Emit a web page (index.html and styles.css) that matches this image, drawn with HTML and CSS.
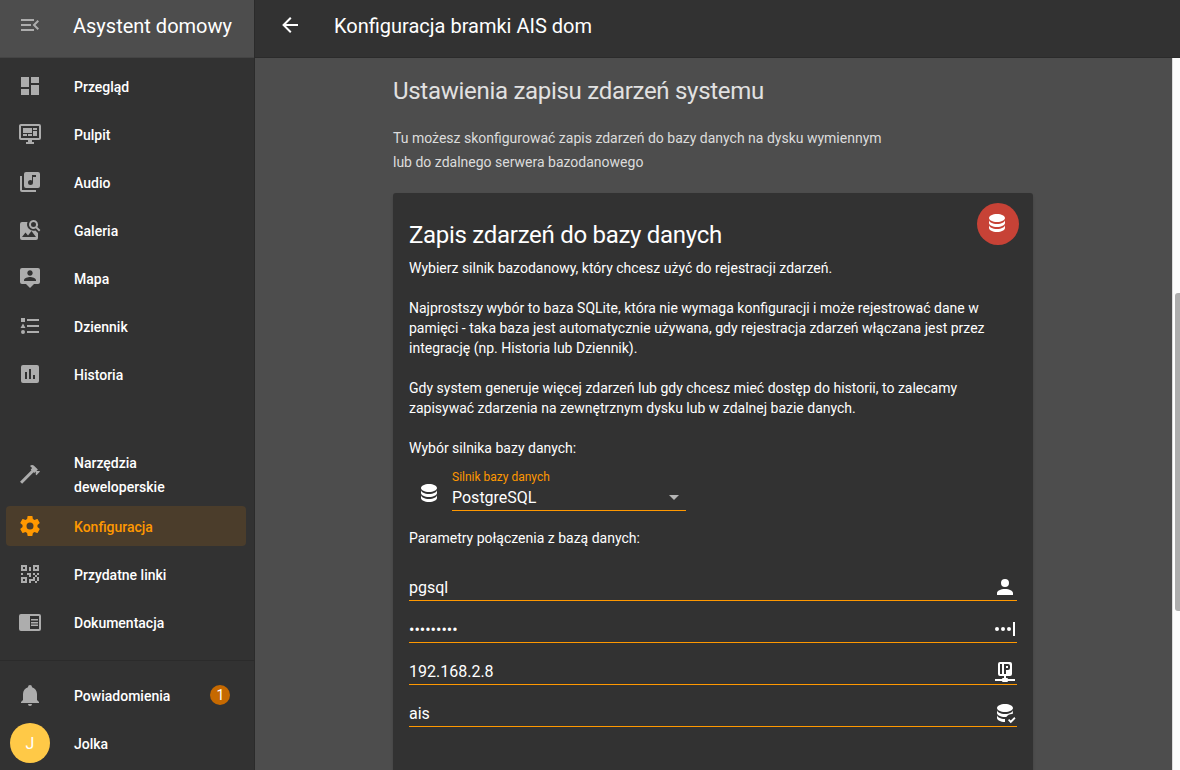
FILE: index.html
```html
<!DOCTYPE html>
<html lang="pl">
<head>
<meta charset="utf-8">
<title>Konfiguracja bramki AIS dom</title>
<link rel="stylesheet" href="styles.css">
</head>
<body>
<div class="app">
  <aside class="sidebar">
    <div class="brand">
      <svg class="icon" viewBox="0 0 24 24"><path d="M21,15.61L19.59,17L14.58,12L19.59,7L21,8.39L17.44,12L21,15.61M3,6H16V8H3V6M3,13V11H13V13H3M3,18V16H16V18H3Z"/></svg>
      <span>Asystent domowy</span>
    </div>
    <nav class="nav">
      <a class="item"><svg class="icon" viewBox="0 0 24 24"><path d="M13,3V9H21V3M13,21H21V11H13M3,21H11V15H3M3,13H11V3H3V13Z"/></svg><span>Przegląd</span></a>
      <a class="item"><svg class="icon" viewBox="0 0 24 24"><path d="M21,16V4H3V16H21M21,2A2,2 0 0,1 23,4V16A2,2 0 0,1 21,18H14V20H16V22H8V20H10V18H3C1.89,18 1,17.1 1,16V4C1,2.89 1.89,2 3,2H21M5,6H14V11H5V6M15,6H19V8H15V6M19,9V14H15V9H19M5,12H9V14H5V12M10,12H14V14H10V12Z"/></svg><span>Pulpit</span></a>
      <a class="item"><svg class="icon" viewBox="0 0 24 24"><path d="M20,2H8A2,2 0 0,0 6,4V16A2,2 0 0,0 8,18H20A2,2 0 0,0 22,16V4A2,2 0 0,0 20,2M18,7H15V12.5A2.5,2.5 0 0,1 12.5,15A2.5,2.5 0 0,1 10,12.5A2.5,2.5 0 0,1 12.5,10C13.07,10 13.58,10.19 14,10.5V5H18M4,6H2V20A2,2 0 0,0 4,22H18V20H4V6Z"/></svg><span>Audio</span></a>
      <a class="item"><svg class="icon" viewBox="0 0 24 24"><path fill-rule="evenodd" d="M15.5,2A4.5,4.5 0 0,1 19.31,8.91L22.41,12L21,13.41L17.86,10.31A4.5,4.5 0 1,1 15.5,2M15.5,4A2.5,2.5 0 0,0 15.5,9A2.5,2.5 0 0,0 15.5,4M4,4H9.5A6.5,6.5 0 0,0 17.5,12.5L20,15V20A2,2 0 0,1 18,22H4A2,2 0 0,1 2,20V6A2,2 0 0,1 4,4M4,19H18L13.5,13L10,17.5L7.5,14.5Z"/></svg><span>Galeria</span></a>
      <a class="item"><svg class="icon" viewBox="0 0 24 24"><path d="M20,2H4A2,2 0 0,0 2,4V16A2,2 0 0,0 4,18H8L12,22L16,18H20A2,2 0 0,0 22,16V4A2,2 0 0,0 20,2M12,4.3C13.5,4.3 14.7,5.5 14.7,7C14.7,8.5 13.5,9.7 12,9.7C10.5,9.7 9.3,8.5 9.3,7C9.3,5.5 10.5,4.3 12,4.3M18,15H6V14.1C6,12.1 10,11 12,11C14,11 18,12.1 18,14.1V15Z" fill-rule="evenodd"/></svg><span>Mapa</span></a>
      <a class="item"><svg class="icon" viewBox="0 0 24 24"><path d="M5,9.5L7.5,14H2.5L5,9.5M3,4H7V8H3V4M5,20A2,2 0 0,0 7,18A2,2 0 0,0 5,16A2,2 0 0,0 3,18A2,2 0 0,0 5,20M9,5V7H21V5H9M9,19H21V17H9V19M9,13H21V11H9V13Z"/></svg><span>Dziennik</span></a>
      <a class="item"><svg class="icon" viewBox="0 0 24 24"><path fill-rule="evenodd" d="M9,17H7V10H9V17M13,17H11V7H13V17M17,17H15V13H17V17M19,3H5A2,2 0 0,0 3,5V19A2,2 0 0,0 5,21H19A2,2 0 0,0 21,19V5A2,2 0 0,0 19,3Z"/></svg><span>Historia</span></a>
    </nav>
    <nav class="nav tools">
      <a class="item tall"><svg class="icon" viewBox="0 0 24 24"><path d="M2,19.63L13.43,8.2L12.72,7.5L14.14,6.07L12,3.89C13.2,2.7 15.09,2.7 16.27,3.89L19.87,7.5L18.45,8.91H21.29L22,9.62L18.45,13.21L17.74,12.5V9.62L16.27,11.04L15.56,10.33L4.13,21.76L2,19.63Z"/></svg><span>Narzędzia<br>deweloperskie</span></a>
      <a class="item active"><svg class="icon" viewBox="0 0 24 24"><path d="M12,15.5A3.5,3.5 0 0,1 8.5,12A3.5,3.5 0 0,1 12,8.5A3.5,3.5 0 0,1 15.5,12A3.5,3.5 0 0,1 12,15.5M19.43,12.97C19.47,12.65 19.5,12.33 19.5,12C19.5,11.67 19.47,11.34 19.43,11L21.54,9.37C21.73,9.22 21.78,8.95 21.66,8.73L19.66,5.27C19.54,5.05 19.27,4.96 19.05,5.05L16.56,6.05C16.04,5.66 15.5,5.32 14.87,5.07L14.5,2.42C14.46,2.18 14.25,2 14,2H10C9.75,2 9.54,2.18 9.5,2.42L9.13,5.07C8.5,5.32 7.96,5.66 7.44,6.05L4.95,5.05C4.73,4.96 4.46,5.05 4.34,5.27L2.34,8.73C2.21,8.95 2.27,9.22 2.46,9.37L4.57,11C4.53,11.34 4.5,11.67 4.5,12C4.5,12.33 4.53,12.65 4.57,12.97L2.46,14.63C2.27,14.78 2.21,15.05 2.34,15.27L4.34,18.73C4.46,18.95 4.73,19.03 4.95,18.95L7.44,17.94C7.96,18.34 8.5,18.68 9.13,18.93L9.5,21.58C9.54,21.82 9.75,22 10,22H14C14.25,22 14.46,21.82 14.5,21.58L14.87,18.93C15.5,18.67 16.04,18.34 16.56,17.94L19.05,18.95C19.27,19.03 19.54,18.95 19.66,18.73L21.66,15.27C21.78,15.05 21.73,14.78 21.54,14.63L19.43,12.97Z"/></svg><span>Konfiguracja</span></a>
      <a class="item"><svg class="icon" viewBox="0 0 24 24"><path d="M3,11H5V13H3V11M11,5H13V9H11V5M9,11H13V15H11V13H9V11M15,11H17V13H19V11H21V13H19V15H21V19H19V21H17V19H13V21H11V17H15V15H17V13H15V11M19,19V15H17V19H19M15,3H21V9H15V3M17,5V7H19V5H17M3,3H9V9H3V3M5,5V7H7V5H5M3,15H9V21H3V15M5,17V19H7V17H5Z"/></svg><span>Przydatne linki</span></a>
      <a class="item"><svg class="icon" viewBox="0 0 24 24"><path fill-rule="evenodd" d="M3,4H21A2,2 0 0,1 23,6V19A2,2 0 0,1 21,21H3A2,2 0 0,1 1,19V6A2,2 0 0,1 3,4M12,6V19H21V6ZM13,9H20V10.5H13ZM13,12H20V13.5H13ZM13,14.5H20V16H13Z"/></svg><span>Dokumentacja</span></a>
    </nav>
    <nav class="nav account">
      <a class="item"><svg class="icon" viewBox="0 0 24 24"><path d="M21,19V20H3V19L5,17V11C5,7.9 7.03,5.17 10,4.29C10,4.19 10,4.1 10,4A2,2 0 0,1 12,2A2,2 0 0,1 14,4C14,4.1 14,4.19 14,4.29C16.97,5.17 19,7.9 19,11V17L21,19M14,21A2,2 0 0,1 12,23A2,2 0 0,1 10,21"/></svg><span>Powiadomienia</span><b class="count">1</b></a>
      <a class="item user"><i class="avatar">J</i><span>Jolka</span></a>
    </nav>
  </aside>
  <div class="page">
    <header class="toolbar">
      <svg class="icon" viewBox="0 0 24 24"><path d="M20,11V13H8L13.5,18.5L12.08,19.92L4.16,12L12.08,4.08L13.5,5.5L8,11H20Z"/></svg>
      <span>Konfiguracja bramki AIS dom</span>
    </header>
    <div class="body">
      <main class="content">
        <h1>Ustawienia zapisu zdarzeń systemu</h1>
        <p class="intro">Tu możesz skonfigurować zapis zdarzeń do bazy danych na dysku wymiennym<br>lub do zdalnego serwera bazodanowego</p>
        <section class="card">
          <div class="card-head">
            <h2>Zapis zdarzeń do bazy danych</h2>
            <div class="status"><svg class="icon" viewBox="0 0 24 24"><path d="M12,3C7.58,3 4,4.79 4,7C4,9.21 7.58,11 12,11C16.42,11 20,9.21 20,7C20,4.79 16.42,3 12,3M4,9V12C4,14.21 7.58,16 12,16C16.42,16 20,14.21 20,12V9C20,11.21 16.42,13 12,13C7.58,13 4,11.21 4,9M4,14V17C4,19.21 7.58,21 12,21C16.42,21 20,19.21 20,17V14C20,16.21 16.42,18 12,18C7.58,18 4,16.21 4,14Z"/></svg></div>
          </div>
          <p>Wybierz silnik bazodanowy, który chcesz użyć do rejestracji zdarzeń.</p>
          <p>Najprostszy wybór to baza SQLite, która nie wymaga konfiguracji i może rejestrować dane w<br>pamięci - taka baza jest automatycznie używana, gdy rejestracja zdarzeń włączana jest przez<br>integrację (np. Historia lub Dziennik).</p>
          <p>Gdy system generuje więcej zdarzeń lub gdy chcesz mieć dostęp do historii, to zalecamy<br>zapisywać zdarzenia na zewnętrznym dysku lub w zdalnej bazie danych.</p>
          <p class="tight">Wybór silnika bazy danych:</p>
          <div class="engine">
            <svg class="icon" viewBox="0 0 24 24"><path d="M12,3C7.58,3 4,4.79 4,7C4,9.21 7.58,11 12,11C16.42,11 20,9.21 20,7C20,4.79 16.42,3 12,3M4,9V12C4,14.21 7.58,16 12,16C16.42,16 20,14.21 20,12V9C20,11.21 16.42,13 12,13C7.58,13 4,11.21 4,9M4,14V17C4,19.21 7.58,21 12,21C16.42,21 20,19.21 20,17V14C20,16.21 16.42,18 12,18C7.58,18 4,16.21 4,14Z"/></svg>
            <div class="select">
              <label>Silnik bazy danych</label>
              <div class="value"><span>PostgreSQL</span><svg class="icon" viewBox="0 0 24 24"><path d="M7,10L12,15L17,10H7Z"/></svg></div>
            </div>
          </div>
          <p class="tight">Parametry połączenia z bazą danych:</p>
          <div class="fields">
            <div class="field"><span>pgsql</span><svg class="icon" viewBox="0 0 24 24"><path d="M12,4A4,4 0 0,1 16,8A4,4 0 0,1 12,12A4,4 0 0,1 8,8A4,4 0 0,1 12,4M12,14C16.42,14 20,15.79 20,18V20H4V18C4,15.79 7.58,14 12,14Z"/></svg></div>
            <div class="field"><span>•••••••••</span><svg class="icon" viewBox="0 0 24 24"><path d="M20,5H22V19H20ZM4,10A2,2 0 0,1 4,14A2,2 0 0,1 4,10M10,10A2,2 0 0,1 10,14A2,2 0 0,1 10,10M16,10A2,2 0 0,1 16,14A2,2 0 0,1 16,10"/></svg></div>
            <div class="field"><span>192.168.2.8</span><svg class="icon" viewBox="0 0 24 24"><path fill-rule="evenodd" d="M7,3H17A2,2 0 0,1 19,5V15A2,2 0 0,1 17,17H13V19H14A1,1 0 0,1 15,20H22V22H15A1,1 0 0,1 14,23H10A1,1 0 0,1 9,22H2V20H9A1,1 0 0,1 10,19H11V17H7A2,2 0 0,1 5,15V5A2,2 0 0,1 7,3M7,5V15H9V5ZM11,5V15H13V11H15A2,2 0 0,0 17,9V7A2,2 0 0,0 15,5ZM13,7H15V9H13Z"/></svg></div>
            <div class="field"><span>ais</span><svg class="icon" viewBox="0 0 24 24"><path d="M12,3C7.58,3 4,4.79 4,7C4,9.21 7.58,11 12,11C16.42,11 20,9.21 20,7C20,4.79 16.42,3 12,3M4,9V12C4,14.21 7.58,16 12,16L13.3,15.9C14.6,14 16.6,13 19,13L19.8,12.8L20,9C20,11.21 16.42,13 12,13C7.58,13 4,11.21 4,9M4,14V17C4,19.21 7.58,21 12,21V18C7.58,18 4,16.21 4,14M17.75,22.16L15,19.16L16.16,18L17.75,19.59L21.34,16L22.5,17.41L17.75,22.16Z"/></svg></div>
          </div>
        </section>
      </main>
      <div class="scrollbar"><div class="thumb"></div></div>
    </div>
  </div>
</div>
</body>
</html>
```
FILE: styles.css
```css
* { box-sizing: border-box; }
body { margin: 0; font-family: Roboto, sans-serif; font-size: 14px; color: #fff; background: #4d4d4d; }
h1, h2, p { margin: 0; font-weight: 400; }
.icon { width: 24px; height: 24px; flex: none; fill: currentColor; }
.app { display: flex; height: 770px; overflow: hidden; }

.sidebar { display: flex; flex-direction: column; width: 255px; flex: none; background: #323232; border-right: 1px solid #2b2b2b; }
.brand { display: flex; align-items: center; gap: 31px; height: 58px; flex: none; padding: 0 18px 7px; font-size: 20px; background: #4d4d4d; border-bottom: 1px solid #444; white-space: nowrap; }
.brand .icon { color: #adadad; }
.brand span, .toolbar span { padding-top: 2px; }
.nav { display: flex; flex-direction: column; gap: 8px; padding: 8px 8px 0 6px; }
.item { display: flex; align-items: center; gap: 32px; height: 40px; padding: 0 12px; border-radius: 4px; font-weight: 500; line-height: 24px; }
.item .icon { color: #adadad; }
.item span { padding-top: 2px; }
.tall { height: 48px; }
.tools { padding-top: 56px; }
.item.active { background: #4b3d2b; color: #ff9800; }
.item.active .icon { color: #ff9800; }
.account { margin-top: 18px; padding-top: 14px; border-top: 1px solid #2b2b2b; }
.count { margin-left: 8px; width: 20px; height: 20px; border-radius: 50%; background: #c66900; font-weight: 400; line-height: 21px; text-align: center; }
.user { padding-left: 4px; gap: 24px; }
.avatar { width: 40px; height: 40px; border-radius: 50%; background: #ffc947; font-style: normal; font-weight: 400; font-size: 16px; line-height: 42px; text-align: center; }

.page { display: flex; flex-direction: column; flex: 1; min-width: 0; }
.toolbar { display: flex; align-items: center; gap: 32px; height: 58px; flex: none; padding: 0 23px 7px; font-size: 20px; background: #323232; border-bottom: 1px solid #2b2b2b; }
.body { display: flex; flex: 1; min-height: 0; }
.content { flex: 1; padding: 17px 139px 0 138px; }
.scrollbar { width: 8px; padding: 235px 0 0 2px; background: #fcfcfc; border-left: 1px solid #dcdcdc; }
.thumb { width: 10px; height: 318px; border-radius: 3px; background: #adadad; }

h1 { font-size: 24px; line-height: 32px; letter-spacing: -0.012em; color: #e1e1e1; }
.intro { margin-top: 19px; line-height: 24px; color: #dcdcdc; }
.card { width: 640px; height: 700px; margin-top: 19px; padding: 10px 16px; border-radius: 3px; background: #323232; box-shadow: 0 2px 3px rgba(0, 0, 0, .16); line-height: 20px; white-space: nowrap; }
.card p { margin-bottom: 20px; }
.card .tight { margin-bottom: 0; }
.card-head { display: flex; justify-content: space-between; height: 55px; }
h2 { padding-top: 16px; font-size: 24px; line-height: 32px; letter-spacing: -0.012em; }
.status { display: grid; place-items: center; width: 42px; height: 42px; margin-right: -2px; padding: 0 2px 2px 0; border-radius: 50%; background: #c74236; }
.engine { display: flex; align-items: flex-start; padding: 11px 0 17px 8px; }
.engine > .icon { margin: 12px 11px 0 0; }
.select { width: 234px; border-bottom: 1px solid #ff9800; height: 42px; }
.select label { display: block; font-size: 12px; line-height: 16px; color: #ff9800; }
.value { display: flex; align-items: center; justify-content: space-between; height: 24px; font-size: 16px; }
.value span { padding-top: 2px; }
.value .icon { color: #b5b5b5; }
.fields { display: grid; gap: 10px; margin-top: 21px; }
.field { display: flex; align-items: center; justify-content: space-between; height: 32px; padding-top: 5px; border-bottom: 1px solid #ff9800; font-size: 16px; }
.field span { padding-top: 2px; }
```
